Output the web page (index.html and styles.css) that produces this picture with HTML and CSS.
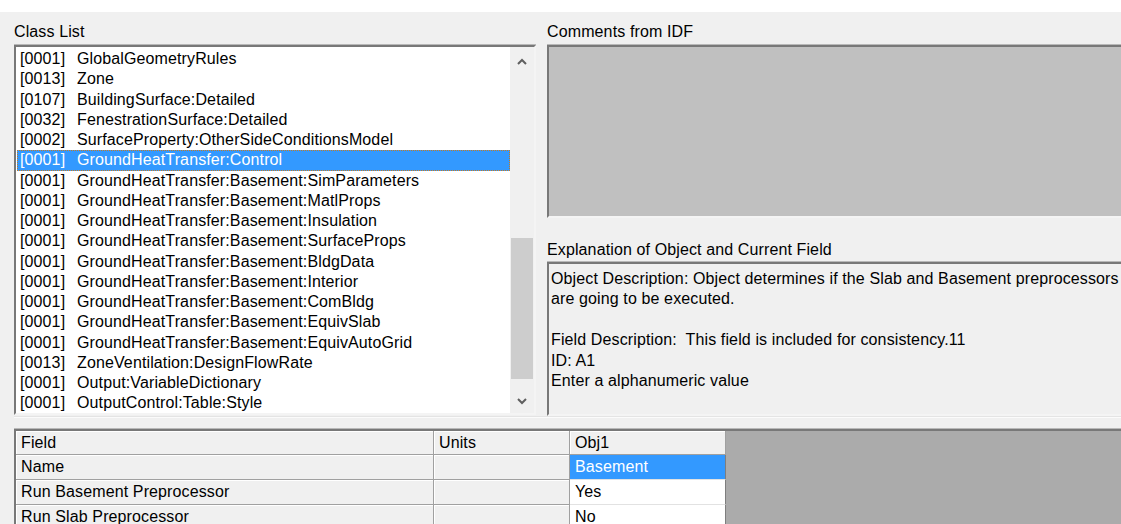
FILE: index.html
```html
<!DOCTYPE html>
<html lang="en">
<head>
<meta charset="utf-8">
<title>IDF Editor</title>
<link rel="stylesheet" href="styles.css">
</head>
<body>
<div class="caption-gap"></div>
<main class="window">
  <div class="upper">
    <section class="pane-class">
      <div class="label">Class List</div>
      <div class="listbox sunken">
        <ul class="items">
          <li><span class="count">[0001]</span>GlobalGeometryRules</li>
          <li><span class="count">[0013]</span>Zone</li>
          <li><span class="count">[0107]</span>BuildingSurface:Detailed</li>
          <li><span class="count">[0032]</span>FenestrationSurface:Detailed</li>
          <li><span class="count">[0002]</span>SurfaceProperty:OtherSideConditionsModel</li>
          <li class="selected"><span class="count">[0001]</span>GroundHeatTransfer:Control</li>
          <li><span class="count">[0001]</span>GroundHeatTransfer:Basement:SimParameters</li>
          <li><span class="count">[0001]</span>GroundHeatTransfer:Basement:MatlProps</li>
          <li><span class="count">[0001]</span>GroundHeatTransfer:Basement:Insulation</li>
          <li><span class="count">[0001]</span>GroundHeatTransfer:Basement:SurfaceProps</li>
          <li><span class="count">[0001]</span>GroundHeatTransfer:Basement:BldgData</li>
          <li><span class="count">[0001]</span>GroundHeatTransfer:Basement:Interior</li>
          <li><span class="count">[0001]</span>GroundHeatTransfer:Basement:ComBldg</li>
          <li><span class="count">[0001]</span>GroundHeatTransfer:Basement:EquivSlab</li>
          <li><span class="count">[0001]</span>GroundHeatTransfer:Basement:EquivAutoGrid</li>
          <li><span class="count">[0013]</span>ZoneVentilation:DesignFlowRate</li>
          <li><span class="count">[0001]</span>Output:VariableDictionary</li>
          <li><span class="count">[0001]</span>OutputControl:Table:Style</li>
        </ul>
        <div class="vscroll">
          <div class="arrow arrow-up">
            <svg width="10" height="7" viewBox="0 0 10 7"><polyline points="1,6 5,2 9,6" fill="none" stroke="#5f5f5f" stroke-width="2"/></svg>
          </div>
          <div class="track"><div class="thumb"></div></div>
          <div class="arrow arrow-down">
            <svg width="10" height="7" viewBox="0 0 10 7"><polyline points="1,1 5,5 9,1" fill="none" stroke="#5f5f5f" stroke-width="2"/></svg>
          </div>
        </div>
      </div>
    </section>
    <section class="pane-info">
      <div class="label">Comments from IDF</div>
      <div class="comments sunken"></div>
      <div class="label label-explain">Explanation of Object and Current Field</div>
      <div class="explain sunken">
        <div class="line">Object Description: Object determines if the Slab and Basement preprocessors</div>
        <div class="line">are going to be executed.</div>
        <div class="line"> </div>
        <div class="line">Field Description:  This field is included for consistency.11</div>
        <div class="line">ID: A1</div>
        <div class="line">Enter a alphanumeric value</div>
      </div>
    </section>
  </div>
  <div class="splitter"></div>
  <div class="grid sunken">
    <div class="cells">
      <div class="cell fixed">Field</div>
      <div class="cell fixed">Units</div>
      <div class="cell fixed">Obj1</div>

      <div class="cell fixed">Name</div>
      <div class="cell fixed"></div>
      <div class="cell value current">Basement</div>

      <div class="cell fixed">Run Basement Preprocessor</div>
      <div class="cell fixed"></div>
      <div class="cell value">Yes</div>

      <div class="cell fixed">Run Slab Preprocessor</div>
      <div class="cell fixed"></div>
      <div class="cell value">No</div>
    </div>
  </div>
</main>
</body>
</html>
```

FILE: styles.css
```css
* {
  box-sizing: border-box;
}

html,
body {
  margin: 0;
  padding: 0;
  overflow: hidden;
}

body {
  width: 1121px;
  height: 524px;
  background: #ffffff;
  font-family: "Liberation Sans", Arial, sans-serif;
  font-size: 16px;
  letter-spacing: 0.12px;
  color: #000000;
}

.caption-gap {
  height: 12px;
  background: #ffffff;
}

.window {
  height: 512px;
  background: #f0f0f0;
  padding: 10px 0 0 14px;
  display: flex;
  flex-direction: column;
  overflow: hidden;
}

/* classic 3D sunken edge */
.sunken {
  border: 2px solid;
  border-color: #787878 #f4f4f4 #f4f4f4 #787878;
  box-shadow: 0 -1px 0 #b8b8b8;
}

.upper {
  display: flex;
  align-items: flex-start;
  gap: 11px;
  flex: none;
}

.label {
  height: 20px;
  line-height: 20px;
  margin-bottom: 3px;
  white-space: nowrap;
}

/* ---- class list ---- */
.pane-class {
  width: 522px;
  flex: none;
  display: flex;
  flex-direction: column;
}

.listbox {
  height: 370px;
  display: flex;
  background: #ffffff;
}

.items {
  flex: 1;
  margin: 0;
  padding: 2px 0 0 0;
  list-style: none;
  background: #ffffff;
  overflow: hidden;
}

.items li {
  height: 20.25px;
  line-height: 20.25px;
  padding-left: 4px;
  white-space: nowrap;
}

.count {
  display: inline-block;
  width: 57px;
}

.items li.selected {
  background: #3399ff;
  color: #ffffff;
  margin-left: 1px;
  padding-left: 3px;
  outline: 1px dotted #c87a1e;
  outline-offset: -1px;
}

.vscroll {
  width: 24px;
  flex: none;
  background: #f0f0f0;
  display: flex;
  flex-direction: column;
}

.arrow {
  display: flex;
  align-items: center;
  justify-content: center;
  flex: none;
}

.arrow-up {
  height: 29px;
}

.arrow-down {
  height: 23px;
}

.track {
  flex: 1;
  padding-top: 162px;
}

.thumb {
  height: 141px;
  margin-left: 1px;
  width: 22px;
  background: #cdcdcd;
}

/* ---- comments + explanation ---- */
.pane-info {
  width: 600px;
  flex: none;
  display: flex;
  flex-direction: column;
}

.comments {
  height: 173px;
  background: #c0c0c0;
}

.label-explain {
  margin-top: 22px;
  margin-bottom: 2px;
}

.explain {
  height: 154px;
  background: #f0f0f0;
  padding: 5px 0 0 2px;
  overflow: hidden;
}

.explain .line {
  height: 20.4px;
  line-height: 20.4px;
  white-space: pre;
}

.splitter {
  flex: none;
  height: 13px;
  border-top: 1px solid #e4e4e4;
  box-shadow: inset 0 1px 0 #fbfbfb;
}

/* ---- field grid ---- */
.grid {
  flex: none;
  width: 1120px;
  height: 140px;
  background: #ababab;
  overflow: hidden;
}

.cells {
  display: grid;
  grid-template-columns: 418px 136px 156px;
  grid-template-rows: 24px 25px 25px 25px;
}

.cell {
  padding-left: 5px;
  line-height: 23px;
  white-space: nowrap;
  border-right: 1px solid #a0a0a0;
  border-bottom: 1px solid #a0a0a0;
}

.cell.fixed {
  background: #f0f0f0;
  box-shadow: inset 1px 1px 0 #ffffff;
}

.cell.value {
  background: #ffffff;
  line-height: 24px;
  border-right-color: #7e7e7e;
  border-bottom-color: #e2e2e2;
}

.cell.current {
  background: #3399ff;
  color: #ffffff;
}
```
